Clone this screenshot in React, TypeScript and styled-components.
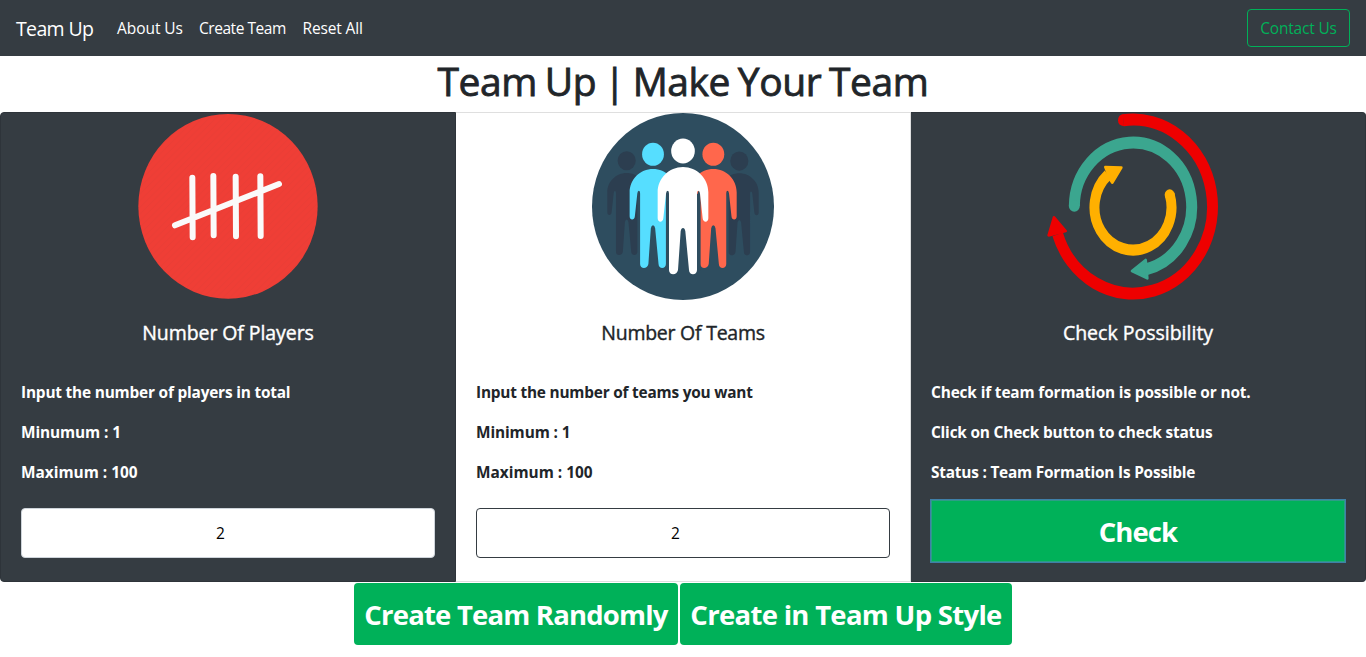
import React from 'react';
import styled, { createGlobalStyle } from 'styled-components';

const GlobalStyle = createGlobalStyle`
  *, *::before, *::after { box-sizing: border-box; }
  body {
    margin: 0;
    background: #fff;
    color: #212529;
    font-family: 'Segoe UI', 'Open Sans', 'Noto Sans', sans-serif;
    font-size: 16px;
    line-height: 1.5;
    overflow: hidden;
  }
`;

const Navbar = styled.nav`
  display: flex;
  align-items: center;
  height: 56px;
  padding: 0 16px;
  background: #353c42;
  white-space: nowrap;
`;

const Brand = styled.a`
  width: 77px;
  margin-right: 16px;
  padding-top: 2px;
  color: #fff;
  font-size: 19.5px;
  letter-spacing: -0.65px;
`;

const NavLinks = styled.div`
  display: flex;
  flex: 1;
`;

const NavLink = styled.a<{ $width: number; $spacing: number }>`
  width: ${(p) => p.$width}px;
  padding: 9px 8px 7px;
  color: #fff;
  font-size: 15.5px;
  letter-spacing: ${(p) => p.$spacing}px;
`;

const ContactButton = styled.button`
  width: 103px;
  height: 38px;
  padding: 2px 0 0;
  border: 1px solid #00b159;
  border-radius: 4px;
  background: transparent;
  color: #00b159;
  font: inherit;
  font-size: 15.5px;
  letter-spacing: -0.2px;
`;

const PageTitle = styled.h1`
  height: 48px;
  margin: 0 0 8px;
  font-size: 39px;
  font-weight: 400;
  line-height: 50px;
  letter-spacing: -0.42px;
  word-spacing: -2px;
  text-align: center;
  white-space: nowrap;
  -webkit-text-stroke: 0.8px currentColor;
`;

const CardGroup = styled.section`
  display: grid;
  grid-template-columns: repeat(3, 1fr);
  height: 470px;
`;

const Card = styled.article<{ $dark?: boolean }>`
  display: flex;
  flex-direction: column;
  border: 1px solid ${(p) => (p.$dark ? '#2e343a' : '#dfdfdf')};
  background: ${(p) => (p.$dark ? '#353c42' : '#fff')};
  color: ${(p) => (p.$dark ? '#fff' : '#212529')};
  &:first-child { border-radius: 4px 0 0 4px; }
  &:last-child { border-radius: 0 4px 4px 0; }
  & + & { border-left: 0; }
`;

const Picture = styled.svg`
  display: block;
  width: 200px;
  height: 187px;
  margin: 0 auto;
`;

const CardBody = styled.div`
  padding: 20px 20px 0;
  white-space: nowrap;
`;

const CardTitle = styled.h5<{ $spacing: number }>`
  margin: 0 0 35px;
  font-size: 19.5px;
  font-weight: 400;
  line-height: 26px;
  letter-spacing: ${(p) => p.$spacing}px;
  text-align: center;
  -webkit-text-stroke: 0.4px currentColor;
`;

const Line = styled.p<{ $spacing: number }>`
  margin: 0 0 16px;
  font-size: 15.4px;
  font-weight: 700;
  line-height: 24px;
  letter-spacing: ${(p) => p.$spacing}px;
  &:last-of-type { margin-bottom: 15px; }
`;

const NumberField = styled.input<{ $border: string }>`
  display: block;
  width: 414px;
  height: 50px;
  margin-top: 23px;
  padding: 0 16px 0 1px;
  border: 1px solid ${(p) => p.$border};
  border-radius: 4px;
  background: #fff;
  color: #000;
  font: inherit;
  font-size: 15.5px;
  text-align: center;
`;

const ActionButton = styled.button<{ $width: number; $spacing: number }>`
  width: ${(p) => p.$width}px;
  height: 62px;
  padding: 2px 0 0;
  border: 0;
  border-radius: 4px;
  background: #00b159;
  color: #fff;
  font: inherit;
  font-size: 27.5px;
  font-weight: 700;
  letter-spacing: ${(p) => p.$spacing}px;
  white-space: nowrap;
`;

const CheckButton = styled(ActionButton)`
  display: block;
  border-radius: 0;
  outline: 1px solid #3f7fa8;
  box-shadow: inset 0 0 0 1px #2d9d86;
`;

const Actions = styled.div`
  display: flex;
  justify-content: center;
  gap: 2px;
  padding-top: 1px;
`;

function Person({ x, top, scale, color }: { x: number; top: number; scale: number; color: string }) {
  return (
    <g transform={`translate(${x} ${top}) scale(${scale})`} fill={color}>
      <ellipse cx="0" cy="-48" rx="35.5" ry="37.5" />
      <path d="M0 0C42 0 76 34 76 76V154C76 168 60 168 59 154L51 80Q50 71 46 71Q42 71 42 80V309C42 326 18 326 18 309L7 193Q5 183 0 183Q-5 183-7 193L-15 309C-18 326-42 326-42 309V80Q-42 71-46 71Q-50 71-51 80L-59 154C-60 168-76 168-76 154V76C-76 34-42 0 0 0Z" />
    </g>
  );
}

const TallyPicture = () => (
  <Picture viewBox="0 21 600 561">
    <defs>
      <pattern id="stripes" width="20" height="20" patternUnits="userSpaceOnUse">
        <path d="M-5 5L5-5M0 20L20 0M15 25L25 15" stroke="#dc3d37" strokeWidth="2.5" opacity=".45" />
      </pattern>
    </defs>
    <ellipse cx="300" cy="301" rx="269" ry="277" fill="#ef3e36" />
    <ellipse cx="300" cy="301" rx="269" ry="277" fill="url(#stripes)" />
    <path
      d="M193 215L194 394M256 210L257 388M323 212L324 391M397 211L398 390M141 358L453 234"
      stroke="#fafafa"
      strokeWidth="18"
      strokeLinecap="round"
    />
  </Picture>
);

const PeoplePicture = () => (
  <Picture viewBox="0 21 600 561">
    <ellipse cx="300" cy="301.5" rx="273" ry="280.5" fill="#2e4d5f" />
    <Person x={131} top={201} scale={0.764} color="#2c3e50" />
    <Person x={469} top={202} scale={0.764} color="#2c3e50" />
    <Person x={210} top={189} scale={0.922} color="#56deff" />
    <Person x={391} top={189} scale={0.922} color="#ff674c" />
    <path d="M249 254H260V495H249ZM340 264H352V495H340Z" fill="#2e4d5f" />
    <Person x={300} top={183} scale={1} color="#fff" />
  </Picture>
);

const CyclePicture = () => (
  <Picture viewBox="0 21 600 561" fill="none">
    <g transform="translate(285 302) scale(1 1.094)" strokeWidth="33">
      <path d="M-29-237A238.5 238.5 0 1 1-226 76" stroke="#ee0000" />
      <path d="M-176-2A176 176 0 1 1 38 172" stroke="#3ba68f" />
    </g>
    <path d="M256 24Q240 27 240 43Q240 59 258 61Z" fill="#ee0000" />
    <ellipse cx="109" cy="300" rx="16.5" ry="17" fill="#3ba68f" />
    <g transform="translate(285 304) scale(1 1.11)">
      <path d="M110-35A115.5 115.5 0 1 1-75-88" stroke="#ffb000" strokeWidth="30" />
    </g>
    <ellipse cx="395" cy="266" rx="15" ry="16" fill="#ffb000" />
    <g strokeWidth="8" strokeLinejoin="round">
      <path d="M48 334L32 388L83 375Z" fill="#ee0000" stroke="#ee0000" />
      <path d="M282 495L323 462L328 517Z" fill="#3ba68f" stroke="#3ba68f" />
      <path d="M202 183L250 185L223 230L217 221Z" fill="#ffb000" stroke="#ffb000" />
    </g>
  </Picture>
);

export default function App() {
  return (
    <>
      <GlobalStyle />
      <Navbar>
        <Brand>Team Up</Brand>
        <NavLinks>
          <NavLink $width={82} $spacing={-0.05}>About Us</NavLink>
          <NavLink $width={103.5} $spacing={-0.45}>Create Team</NavLink>
          <NavLink $width={78} $spacing={-0.15}>Reset All</NavLink>
        </NavLinks>
        <ContactButton>Contact Us</ContactButton>
      </Navbar>
      <PageTitle>Team Up | Make Your Team</PageTitle>
      <CardGroup>
        <Card $dark>
          <TallyPicture />
          <CardBody>
            <CardTitle $spacing={-0.08}>Number Of Players</CardTitle>
            <Line $spacing={-0.19}>Input the number of players in total</Line>
            <Line $spacing={-0.1}>Minumum : 1</Line>
            <Line $spacing={0}>Maximum : 100</Line>
            <NumberField $border="#ced4da" defaultValue="2" />
          </CardBody>
        </Card>
        <Card>
          <PeoplePicture />
          <CardBody>
            <CardTitle $spacing={-0.25}>Number Of Teams</CardTitle>
            <Line $spacing={-0.21}>Input the number of teams you want</Line>
            <Line $spacing={-0.1}>Minimum : 1</Line>
            <Line $spacing={0}>Maximum : 100</Line>
            <NumberField $border="#353c42" defaultValue="2" />
          </CardBody>
        </Card>
        <Card $dark>
          <CyclePicture />
          <CardBody>
            <CardTitle $spacing={0}>Check Possibility</CardTitle>
            <Line $spacing={-0.14}>Check if team formation is possible or not.</Line>
            <Line $spacing={-0.19}>Click on Check button to check status</Line>
            <Line $spacing={-0.21}>Status : Team Formation Is Possible</Line>
            <CheckButton $width={414} $spacing={-0.9}>Check</CheckButton>
          </CardBody>
        </Card>
      </CardGroup>
      <Actions>
        <ActionButton $width={324} $spacing={-0.8}>Create Team Randomly</ActionButton>
        <ActionButton $width={332} $spacing={-0.7}>Create in Team Up Style</ActionButton>
      </Actions>
    </>
  );
}
